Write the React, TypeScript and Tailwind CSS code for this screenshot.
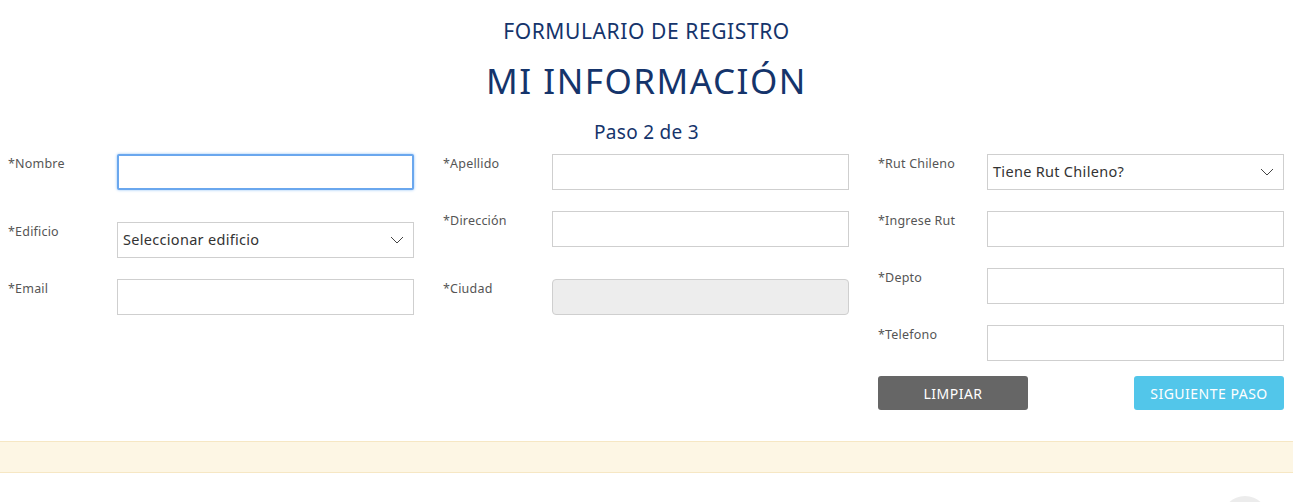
import React from 'react';

const font = { fontFamily: '"Noto Sans", "Open Sans", sans-serif' };

const Chevron = () =>
<svg width="14" height="8" viewBox="0 0 14 8" fill="none" className="shrink-0">
    <path d="M1 1L7 7L13 1" stroke="#444" strokeWidth="1" />
  </svg>;

const Field = ({ label, className = '', children }: {label: string;className?: string;children: React.ReactNode;}) =>
<div className={`flex items-start ${className}`}>
    <label className="w-[109px] shrink-0 pt-[1px] text-[12.5px] tracking-[0.2px] text-[#555]">{label}</label>
    <div className="w-[297px]">{children}</div>
  </div>;

const TextInput = ({ focus = false, disabled = false }: {focus?: boolean;disabled?: boolean;}) =>
<input
  disabled={disabled}
  className={
  focus ?
  'block h-[36px] w-full border-2 border-[#6aa7ee] bg-white outline-none shadow-[0_0_3px_#8fc0f7] rounded-[2px]' :
  disabled ?
  'block h-[36px] w-full rounded-[4px] border border-[#cfcfcf] bg-[#ededed] outline-none' :
  'block h-[36px] w-full border border-[#cfcfcf] bg-white outline-none'
  } />;

const SelectBox = ({ text }: {text: string;}) =>
<div className="flex h-[36px] w-full items-center justify-between border border-[#cfcfcf] bg-white pl-[5px] pr-[9px] text-[14.5px] tracking-[0.3px] text-[#333]">
    <span>{text}</span>
    <Chevron />
  </div>;

export default function App() {
  return (
    <div className="relative min-h-[502px] w-full overflow-hidden bg-white" style={font}>
      <div className="flex flex-col items-center pt-[18px] text-[#15346b]">
        <h2 className="text-[21px] leading-[26px] tracking-[0.6px]">FORMULARIO DE REGISTRO</h2>
        <h1 className="mt-[16px] text-[35px] leading-[42px] tracking-[1.5px]">MI INFORMACIÓN</h1>
        <p className="mt-[18px] text-[19px] leading-[24px] tracking-[0.3px]">Paso 2 de 3</p>
      </div>

      <div className="mt-[10px] flex">
        {/* column 1 */}
        <div className="flex w-[435px] flex-col pl-[8px]">
          <Field label="*Nombre">
            <TextInput focus />
          </Field>
          <Field label="*Edificio" className="mt-[32px]">
            <SelectBox text="Seleccionar edificio" />
          </Field>
          <Field label="*Email" className="mt-[21px]">
            <TextInput />
          </Field>
        </div>

        {/* column 2 */}
        <div className="flex w-[435px] flex-col pl-[8px]">
          <Field label="*Apellido">
            <TextInput />
          </Field>
          <Field label="*Dirección" className="mt-[21px]">
            <TextInput />
          </Field>
          <Field label="*Ciudad" className="mt-[32px]">
            <TextInput disabled />
          </Field>
        </div>

        {/* column 3 */}
        <div className="flex w-[423px] flex-col pl-[8px]">
          <Field label="*Rut Chileno">
            <SelectBox text="Tiene Rut Chileno?" />
          </Field>
          <Field label="*Ingrese Rut" className="mt-[21px]">
            <TextInput />
          </Field>
          <Field label="*Depto" className="mt-[21px]">
            <TextInput />
          </Field>
          <Field label="*Telefono" className="mt-[21px]">
            <TextInput />
          </Field>
          <div className="mt-[15px] flex w-[406px] justify-between">
            <button className="h-[34px] w-[150px] rounded-[3px] bg-[#666666] text-[14px] tracking-[0.5px] text-white">LIMPIAR</button>
            <button className="h-[34px] w-[150px] rounded-[3px] bg-[#52c6ea] text-[14px] tracking-[0.5px] text-white">SIGUIENTE PASO</button>
          </div>
        </div>
      </div>

      <div className="mt-[31px] h-[32px] w-full border-y border-[#f6e7c4] bg-[#fdf6e4]" />

      <div className="absolute left-[1222px] top-[496px] h-[46px] w-[46px] rounded-full bg-[#ececec]" />
    </div>);

}
